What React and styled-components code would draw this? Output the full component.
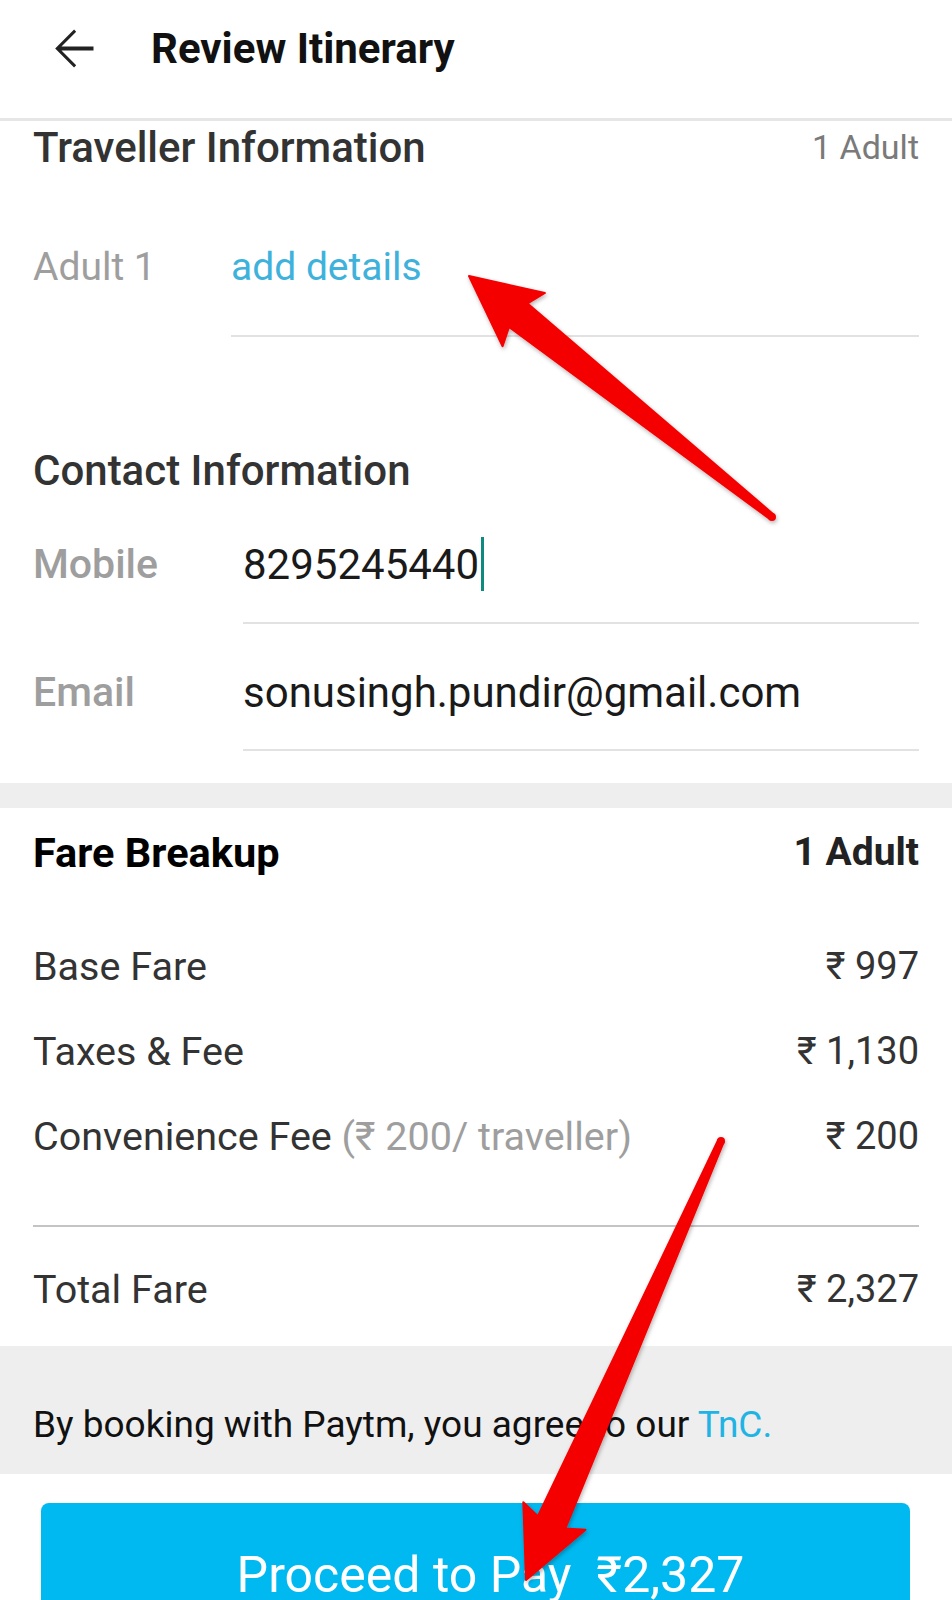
import styled, { createGlobalStyle } from "styled-components";

const GlobalStyle = createGlobalStyle`
  body {
    margin: 0;
    background: #fff;
    font-family: Roboto, "Noto Sans", "DejaVu Sans", sans-serif;
    overflow: hidden;
  }
`;

const Page = styled.div`
  position: relative;
  width: 952px;
  min-height: 1600px;
  background: #fff;
`;

const Header = styled.header`
  height: 121px;
  display: flex;
  align-items: flex-start;
  padding: 17px 0 0 41px;
  box-sizing: border-box;
  border-bottom: 3px solid #e6e6e6;
`;

const BackIcon = styled.svg`
  width: 63px;
  height: 63px;
  flex: none;
`;

const Title = styled.h1`
  margin: 0 0 0 47px;
  font-size: 42px;
  line-height: 63px;
  font-weight: 700;
  color: #111;
`;

const Section = styled.section`
  padding: 0 33px;
`;

const HeadRow = styled.div`
  display: flex;
  justify-content: space-between;
  align-items: center;
  height: 50px;
  margin-top: ${(p) => p.$top || 0}px;
`;

const Heading = styled.h2`
  margin: 0;
  font-size: ${(p) => (p.$bold ? 41.5 : 42)}px;
  font-weight: ${(p) => (p.$bold ? 700 : 500)};
  color: ${(p) => (p.$bold ? "#000" : "#333")};
`;

const Count = styled.span`
  font-size: ${(p) => (p.$bold ? 39 : 34)}px;
  font-weight: ${(p) => (p.$bold ? 700 : 400)};
  color: ${(p) => (p.$bold ? "#222" : "#7a7a7a")};
`;

const FieldRow = styled.div`
  display: grid;
  grid-template-columns: ${(p) => p.$label}px 1fr;
  margin-top: ${(p) => p.$top}px;
`;

const Label = styled.span`
  font-size: ${(p) => (p.$strong ? 41 : 39)}px;
  font-weight: ${(p) => (p.$strong ? 500 : 400)};
  line-height: 50px;
  color: #9e9e9e;
`;

const Value = styled.div`
  display: flex;
  align-items: center;
  height: 50px;
  padding-bottom: ${(p) => p.$pad}px;
  border-bottom: 2px solid #e2e2e2;
  font-size: ${(p) => (p.$link ? 39 : 42)}px;
  color: ${(p) => (p.$link ? "#3fb2dc" : "#1a1a1a")};
`;

const Caret = styled.span`
  display: inline-block;
  width: 3px;
  height: 54px;
  margin-left: 2px;
  background: #0f8a7e;
`;

const Band = styled.div`
  height: 25px;
  margin-top: 32px;
  background: #eeeeee;
`;

const FareRow = styled.div`
  display: flex;
  justify-content: space-between;
  align-items: center;
  height: 50px;
  margin-top: ${(p) => p.$top}px;
  font-size: 39.5px;
  color: #333;
`;

const Amount = styled.span`
  font-size: 38px;
`;

const Muted = styled.span`
  color: #9e9e9e;
`;

const Divider = styled.hr`
  margin: 64px 0 0;
  border: none;
  height: 2px;
  background: #c4c4c4;
`;

const Terms = styled.div`
  margin-top: 32px;
  padding: 54px 33px 24px;
  background: #eeeeee;
  font-size: 37px;
  line-height: 50px;
  color: #111;
`;

const Link = styled.span`
  color: #1fb4e4;
`;

const PayButton = styled.div`
  width: 869px;
  height: 150px;
  margin: 29px 0 0 41px;
  padding: 44px 0 0 30px;
  box-sizing: border-box;
  border-radius: 8px 8px 0 0;
  background: #00b9f1;
  color: #fff;
  font-size: 50px;
  line-height: 56px;
  text-align: center;
  cursor: pointer;
`;

const Overlay = styled.svg`
  position: absolute;
  top: 0;
  left: 0;
  pointer-events: none;
`;

function arrowPoints(tail, tip, { tailW = 3, neckW = 15, headW = 34, headL = 70, notch = 7 } = {}) {
  const [x1, y1] = tail;
  const dx = tip[0] - x1;
  const dy = tip[1] - y1;
  const len = Math.hypot(dx, dy);
  const ux = dx / len;
  const uy = dy / len;
  const pt = (a, b) => `${(x1 + ux * a - uy * b).toFixed(1)},${(y1 + uy * a + ux * b).toFixed(1)}`;
  return [
    pt(0, tailW),
    pt(len - headL + notch, neckW),
    pt(len - headL, headW),
    pt(len, 0),
    pt(len - headL, -headW),
    pt(len - headL + notch, -neckW),
    pt(0, -tailW),
  ].join(" ");
}

const arrows = [
  { tail: [772, 517], tip: [469, 276] },
  { tail: [721, 1141], tip: [526, 1580] },
];

export default function App() {
  return (
    <Page>
      <GlobalStyle />
      <Header>
        <BackIcon viewBox="0 0 24 24">
          <path fill="#222" d="M20 11.2H7.8l5.6-5.6L12.6 4.8 5.4 12l7.2 7.2.8-.8-5.6-5.6H20z" />
        </BackIcon>
        <Title>Review Itinerary</Title>
      </Header>

      <Section>
        <HeadRow $top={1}>
          <Heading>Traveller Information</Heading>
          <Count>1 Adult</Count>
        </HeadRow>
        <FieldRow $label={198} $top={70}>
          <Label>Adult 1</Label>
          <Value $link $pad={43}>add details</Value>
        </FieldRow>

        <HeadRow $top={108}>
          <Heading>Contact Information</Heading>
        </HeadRow>
        <FieldRow $label={210} $top={44}>
          <Label $strong>Mobile</Label>
          <Value $pad={33}>
            8295245440
            <Caret />
          </Value>
        </FieldRow>
        <FieldRow $label={210} $top={43}>
          <Label $strong>Email</Label>
          <Value $pad={32}>sonusingh.pundir@gmail.com</Value>
        </FieldRow>
      </Section>

      <Band />

      <Section>
        <HeadRow $top={19}>
          <Heading $bold>Fare Breakup</Heading>
          <Count $bold>1 Adult</Count>
        </HeadRow>
        <FareRow $top={64}>
          <span>Base Fare</span>
          <Amount>₹ 997</Amount>
        </FareRow>
        <FareRow $top={35}>
          <span>Taxes &amp; Fee</span>
          <Amount>₹ 1,130</Amount>
        </FareRow>
        <FareRow $top={35}>
          <span>
            Convenience Fee <Muted>(₹ 200/ traveller)</Muted>
          </span>
          <Amount>₹ 200</Amount>
        </FareRow>
        <Divider />
        <FareRow $top={37}>
          <span>Total Fare</span>
          <Amount>₹ 2,327</Amount>
        </FareRow>
      </Section>

      <Terms>
        By booking with Paytm, you agree to our <Link>TnC.</Link>
      </Terms>

      <PayButton role="button">Proceed to Pay&nbsp;&nbsp;₹2,327</PayButton>

      <Overlay width="952" height="1600" viewBox="0 0 952 1600">
        <defs>
          <filter id="arrowShadow" x="-10%" y="-10%" width="120%" height="120%">
            <feDropShadow dx="1" dy="2" stdDeviation="2" floodColor="#000" floodOpacity="0.3" />
          </filter>
        </defs>
        {arrows.map((a, i) => (
          <g key={i} fill="#f40000" filter="url(#arrowShadow)">
            <polygon points={arrowPoints(a.tail, a.tip)} strokeLinejoin="round" stroke="#f40000" strokeWidth="2" />
            <circle cx={a.tail[0]} cy={a.tail[1]} r="4" />
          </g>
        ))}
      </Overlay>
    </Page>
  );
}
